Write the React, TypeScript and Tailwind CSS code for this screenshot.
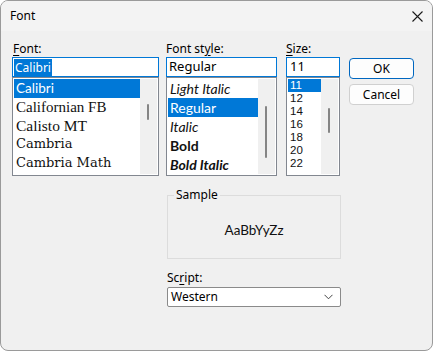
const fontItems = [
  { label: "Calibri", cls: "font-['Lato',sans-serif] text-[13.5px]" },
  { label: "Californian FB", cls: "font-['Liberation_Serif',serif] text-[15px]" },
  { label: "Calisto MT", cls: "font-['Liberation_Serif',serif] text-[15.5px]" },
  { label: "Cambria", cls: "font-['DejaVu_Serif',serif] text-[13px]" },
  { label: "Cambria Math", cls: "font-['DejaVu_Serif',serif] text-[13px]" },
];

const styleItems = [
  { label: "Light Italic", cls: "italic" },
  { label: "Regular", cls: "" },
  { label: "Italic", cls: "italic" },
  { label: "Bold", cls: "font-bold" },
  { label: "Bold Italic", cls: "font-bold italic" },
];

const sizeItems = ["11", "12", "14", "16", "18", "20", "22"];

function Scrollbar({ top, height }: { top: number; height: number }) {
  return (
    <div className="relative w-[17px] self-stretch bg-[#f0f0f0]">
      <div
        className="absolute left-[7px] w-[2px] rounded-full bg-[#858585]"
        style={{ top, height }}
      />
    </div>
  );
}

export default function App() {
  return (
    <div className="w-[433px] h-[351px] bg-white">
      <div className="w-[433px] h-[351px] flex flex-col rounded-[8px] border border-[#9a9a9a] overflow-hidden bg-[#f0f0f0] font-['Noto_Sans',sans-serif] text-[12px] text-black">
        {/* title bar */}
        <div className="h-[30px] shrink-0 flex items-center justify-between bg-[#f3f3f3] pl-[9px] pr-[9px]">
          <span className="text-[12px] leading-none">Font</span>
          <svg width="11" height="11" viewBox="0 0 11 11">
            <path d="M0.5 0.5 L10.5 10.5 M10.5 0.5 L0.5 10.5" stroke="#1a1a1a" strokeWidth="1.1" />
          </svg>
        </div>

        <div className="flex-1 pt-[10px] pl-[11px]">
          <div className="flex items-start">
            {/* Font */}
            <div className="w-[147px] flex flex-col">
              <div className="h-[16px] leading-[16px] pl-[1px]">
                <span className="underline underline-offset-2">F</span>ont:
              </div>
              <div className="h-[20px] bg-white border border-[#0078d7] flex items-center px-[1px]">
                <span className="bg-[#0078d7] text-white leading-[17px] h-[17px] px-[1px]">Calibri</span>
              </div>
              <div className="h-[99px] bg-white border border-[#828790] flex p-[1px]">
                <div className="flex-1 flex flex-col">
                  {fontItems.map((it, i) => (
                    <div
                      key={it.label}
                      className={`h-[18.5px] flex items-center pl-[2px] whitespace-nowrap overflow-hidden ${it.cls} ${
                        i === 0 ? "bg-[#0078d7] text-white" : "text-[#111]"
                      }`}
                    >
                      {it.label}
                    </div>
                  ))}
                </div>
                <Scrollbar top={25} height={16} />
              </div>
            </div>

            {/* Font style */}
            <div className="w-[111px] ml-[7px] flex flex-col">
              <div className="h-[16px] leading-[16px]">
                Font st<span className="underline underline-offset-2">y</span>le:
              </div>
              <div className="h-[20px] bg-white border border-[#0078d7] flex items-center pl-[2px] text-[13px]">
                Regular
              </div>
              <div className="h-[99px] bg-white border border-[#828790] flex p-[1px]">
                <div className="flex-1 flex flex-col font-['Lato',sans-serif] text-[14px]">
                  {styleItems.map((it, i) => (
                    <div
                      key={it.label}
                      className={`h-[19px] flex items-center pl-[2px] whitespace-nowrap ${it.cls} ${
                        i === 1 ? "bg-[#0078d7] text-white" : "text-[#111]"
                      }`}
                    >
                      {it.label}
                    </div>
                  ))}
                </div>
                <Scrollbar top={27} height={52} />
              </div>
            </div>

            {/* Size */}
            <div className="w-[54px] ml-[9px] flex flex-col">
              <div className="h-[16px] leading-[16px]">
                <span className="underline underline-offset-2">S</span>ize:
              </div>
              <div className="h-[20px] bg-white border border-[#0078d7] flex items-center pl-[3px] text-[13px]">
                11
              </div>
              <div className="h-[99px] bg-white border border-[#828790] flex p-[1px]">
                <div className="flex-1 flex flex-col font-['Liberation_Sans',sans-serif] text-[11.5px]">
                  {sizeItems.map((s, i) => (
                    <div
                      key={s}
                      className={`h-[13px] leading-[13px] pl-[2px] ${
                        i === 0 ? "bg-[#0078d7] text-white" : "text-[#111]"
                      }`}
                    >
                      {s}
                    </div>
                  ))}
                </div>
                <Scrollbar top={29} height={25} />
              </div>
            </div>

            {/* Buttons */}
            <div className="w-[65px] ml-[9px] pt-[17px] flex flex-col gap-[5px]">
              <button className="h-[21px] rounded-[4px] border border-[#0067c0] bg-[#fdfdfd] text-[12px] leading-none">
                OK
              </button>
              <button className="h-[21px] rounded-[4px] border border-[#d0d0d0] bg-[#fdfdfd] text-[12px] leading-none">
                Cancel
              </button>
            </div>
          </div>

          {/* Sample + Script */}
          <div className="ml-[155px] w-[174px] pt-[19px]">
            <div className="relative h-[64px] border border-[#dcdcdc] flex items-center justify-center">
              <span className="absolute -top-[9px] left-[6px] px-[2px] bg-[#f0f0f0] leading-[16px]">Sample</span>
              <span className="font-['Lato',sans-serif] text-[13.5px] text-[#111] pt-[6px]">AaBbYyZz</span>
            </div>
            <div className="h-[16px] leading-[16px] mt-[11px]">
              Sc<span className="underline underline-offset-2">r</span>ipt:
            </div>
            <div className="mt-[1px] h-[20px] bg-white border border-[#8a8a8a] rounded-[2px] flex items-center justify-between pl-[3px] pr-[7px]">
              <span>Western</span>
              <svg width="9" height="6" viewBox="0 0 9 6">
                <path d="M0.5 0.8 L4.5 4.8 L8.5 0.8" fill="none" stroke="#444" strokeWidth="1" />
              </svg>
            </div>
          </div>
        </div>
      </div>
    </div>
  );
}
